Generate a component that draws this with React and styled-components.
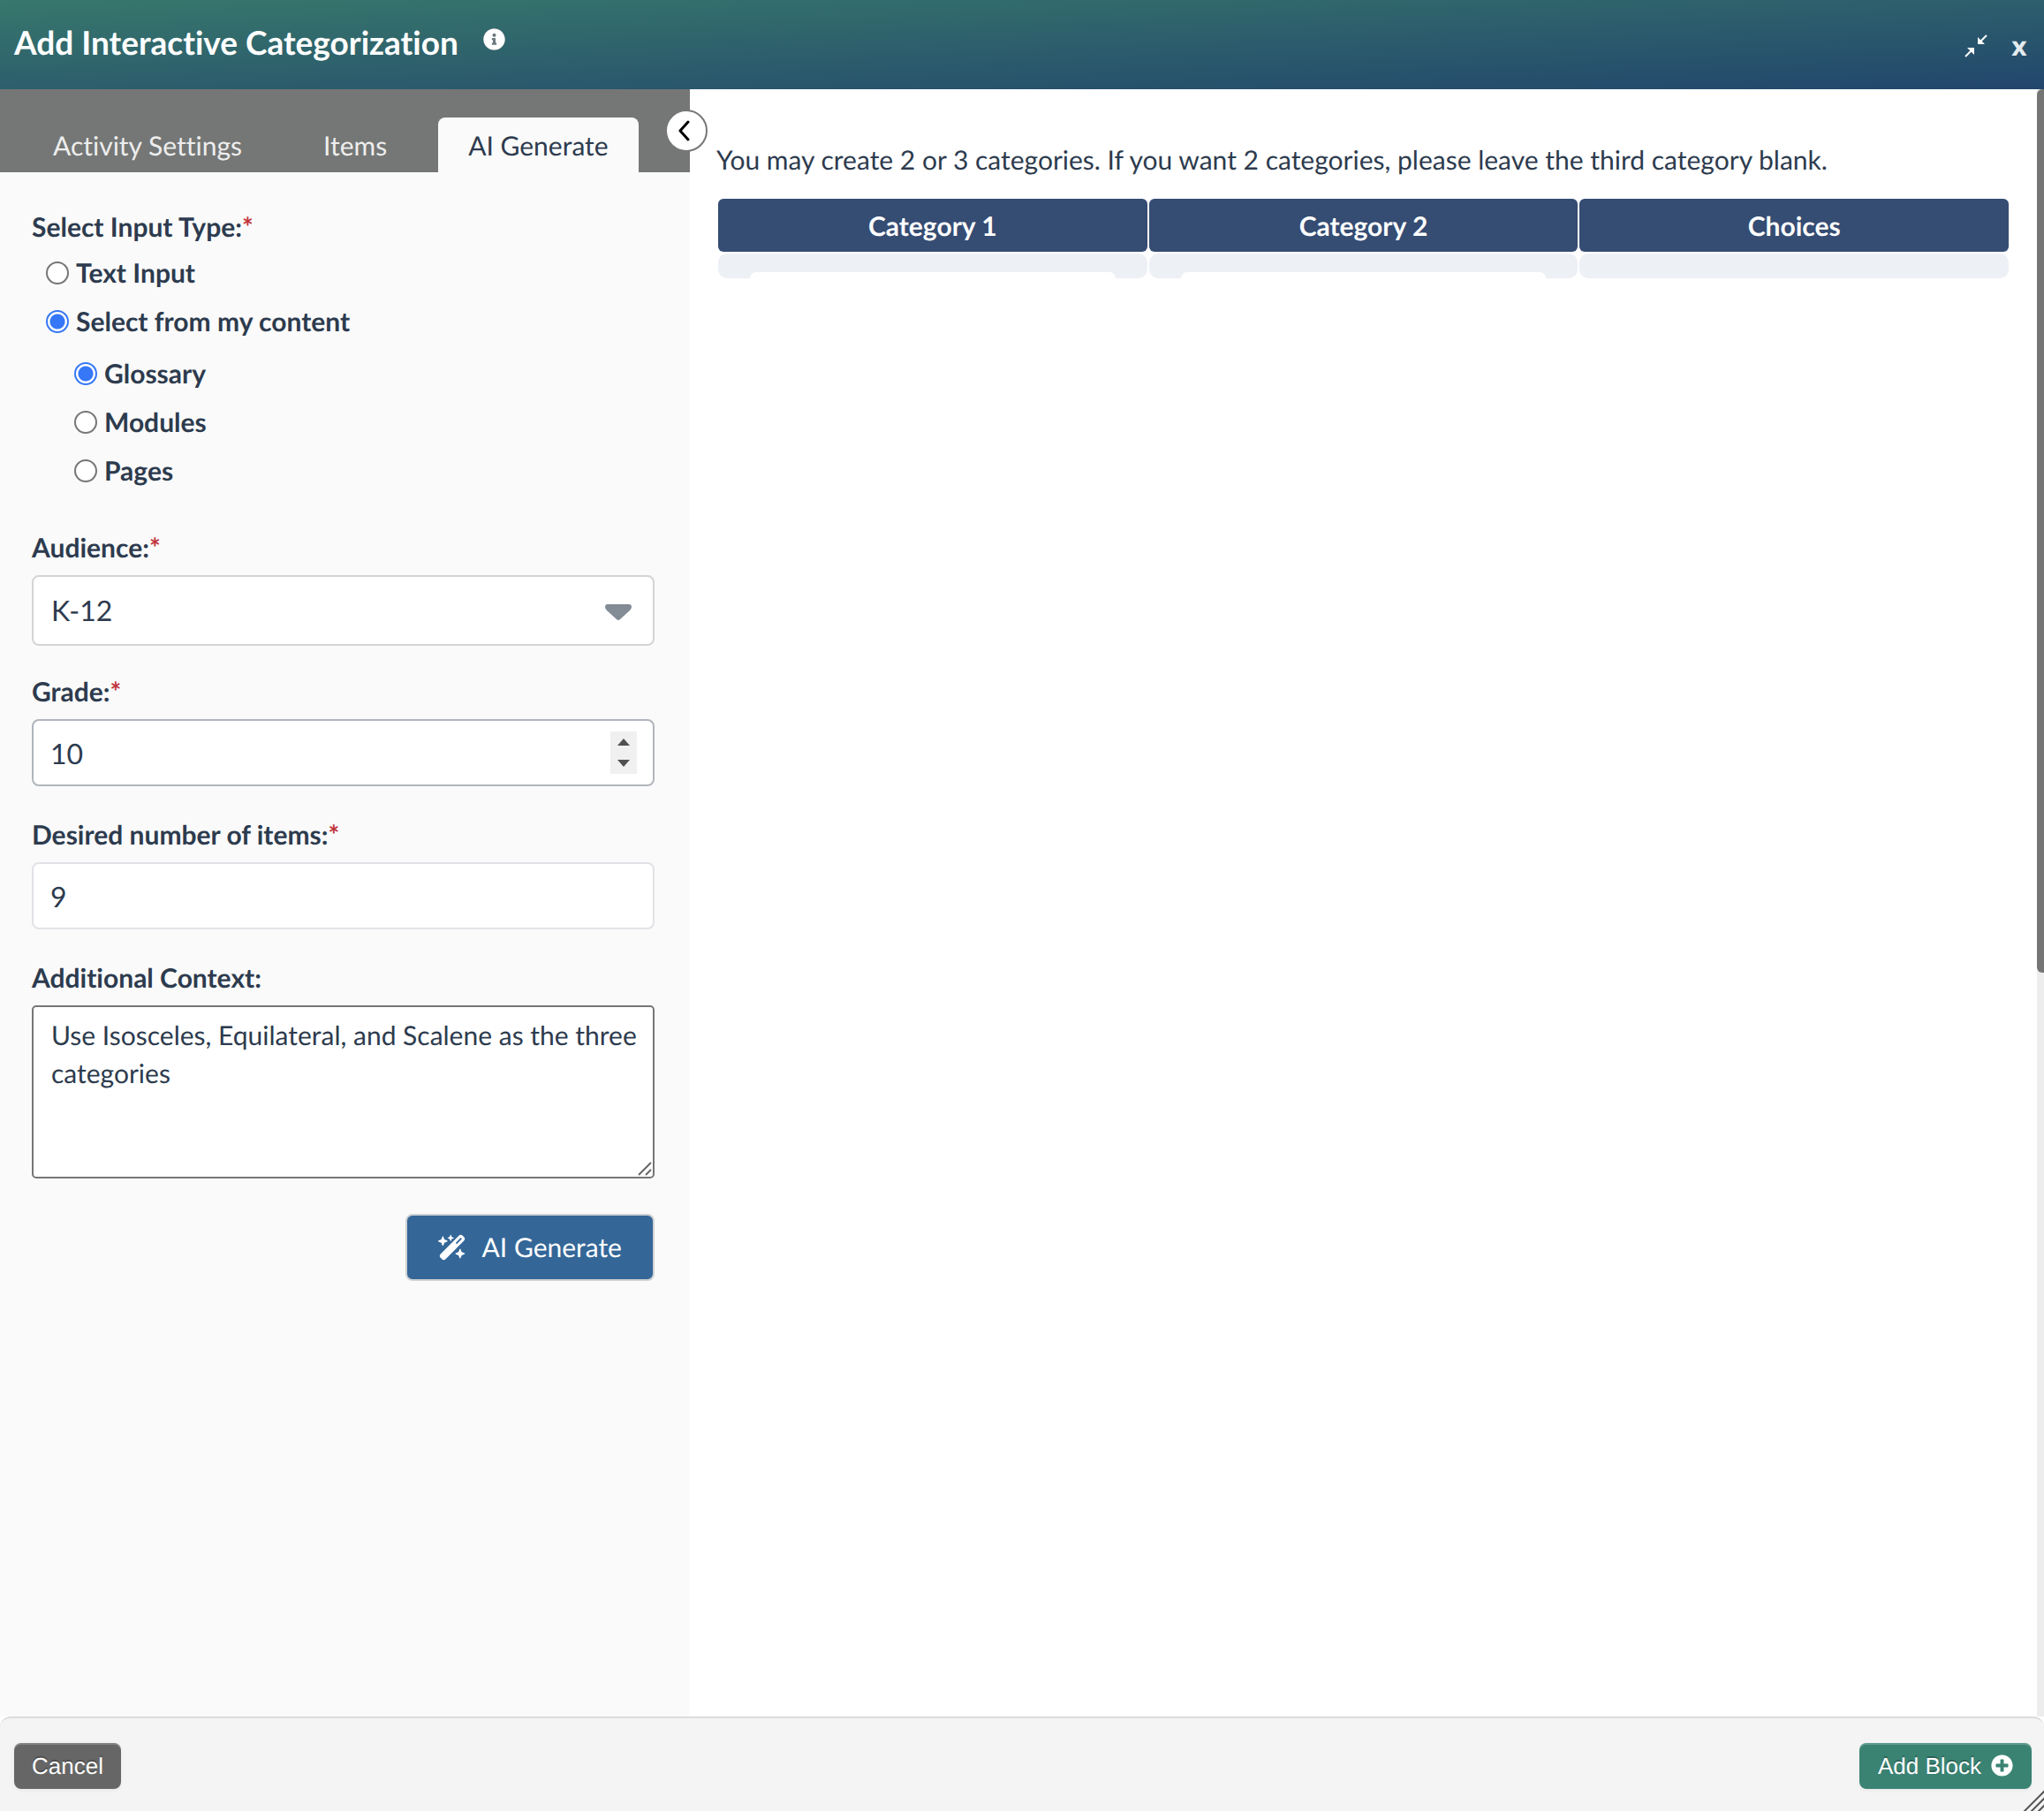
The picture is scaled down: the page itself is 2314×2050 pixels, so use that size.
import React, { useState } from "react";
import styled, { createGlobalStyle } from "styled-components";
import { FaInfoCircle, FaPlusCircle } from "react-icons/fa";
import { FaWandMagicSparkles } from "react-icons/fa6";

const GlobalStyle = createGlobalStyle`
  *, *::before, *::after { box-sizing: border-box; }
  body { margin: 0; }
  button, input, select, textarea {
    font: inherit;
    color: inherit;
    text-rendering: inherit;
    font-variant-ligatures: inherit;
  }
`;

const Dialog = styled.div`
  position: relative;
  display: flex;
  flex-direction: column;
  min-height: 100vh;
  background: #fff;
  color: #2d3b4e;
  font-family: Lato, "Open Sans", sans-serif;
  font-size: 30px;
  line-height: 44px;
  font-variant-ligatures: none;
  text-rendering: geometricPrecision;
`;

const Header = styled.header`
  display: flex;
  align-items: center;
  justify-content: space-between;
  height: 101px;
  padding: 0 16px;
  background: linear-gradient(to bottom right, #37776c, #22466c);
  color: #fff;
`;

const TitleGroup = styled.div`
  display: flex;
  align-items: flex-start;
  gap: 28px;
  padding-bottom: 6px;
`;

const Title = styled.h1`
  margin: 0;
  font-size: 37px;
  line-height: 48px;
  font-weight: 700;
`;

const IconButton = styled.button`
  display: flex;
  align-items: center;
  justify-content: center;
  padding: 0;
  border: 0;
  background: none;
  color: #fff;
  cursor: pointer;
`;

const InfoButton = styled(IconButton)`
  margin-top: 8px;
  border-radius: 50%;
  background: #6c7a80;
  font-size: 25px;
`;

const WindowControls = styled.div`
  display: flex;
  align-items: center;
  gap: 24px;
  padding-top: 2px;
`;

const CloseButton = styled(IconButton)`
  width: 24px;
  color: #e4ebee;
  font-family: "Noto Sans", sans-serif;
  font-size: 30px;
  line-height: 48px;
  font-weight: 700;
`;

const Body = styled.div`
  display: flex;
  flex: 1;
`;

const Sidebar = styled.aside`
  position: relative;
  width: 33.75%;
  flex: none;
  background: #fafafa;
`;

const Tabs = styled.nav`
  display: flex;
  align-items: flex-end;
  gap: 24px;
  height: 94px;
  padding-left: 26px;
  background: #757776;
`;

const Tab = styled.button`
  height: 62px;
  padding: 2px 34px 0;
  border: 0;
  border-radius: 8px 8px 0 0;
  background: ${(p) => (p.$active ? "#fafafa" : "transparent")};
  color: ${(p) => (p.$active ? "#2d3b4e" : "#eee")};
  cursor: pointer;
`;

const CollapseButton = styled.button`
  position: absolute;
  top: 23px;
  right: -20px;
  z-index: 1;
  display: flex;
  align-items: center;
  justify-content: center;
  width: 48px;
  height: 48px;
  padding: 0 6px 0 0;
  border: 2px solid #757776;
  border-radius: 50%;
  background: #fff;
  color: #000;
  cursor: pointer;
`;

const Form = styled.form`
  display: flex;
  flex-direction: column;
  gap: 33px;
  padding: 40px 40px 40px 36px;
`;

const LearnerFields = styled.div`
  display: flex;
  flex-direction: column;
  gap: 30px;
`;

const Field = styled.div`
  display: flex;
  flex-direction: column;
  gap: 8px;
`;

const Label = styled.label`
  line-height: 45px;
  font-weight: 700;
`;

const Required = styled.span`
  color: #c0343c;
`;

const RadioGroup = styled.fieldset`
  display: flex;
  flex-direction: column;
  gap: 11px;
  margin: 0;
  padding: 0;
  border: 0;
`;

const Legend = styled.legend`
  margin-bottom: 8px;
  padding: 0;
  font-weight: 700;
`;

const RadioSubGroup = styled.div`
  display: flex;
  flex-direction: column;
  gap: 11px;
  padding: 4px 0 10px 32px;
`;

const RadioRow = styled.label`
  display: flex;
  align-items: center;
  gap: 8px;
  padding-left: 16px;
  font-weight: 700;
`;

const Radio = styled.input`
  appearance: none;
  width: 26px;
  height: 26px;
  margin: 0;
  border: 2px solid #767676;
  border-radius: 50%;
  background: #fff;

  &:checked {
    border-color: #3577f6;
    background: radial-gradient(circle, #3577f6 8px, #fff 9px);
  }
`;

const Control = styled.div`
  display: flex;
  align-items: center;
  height: ${(p) => p.$height}px;
  padding-right: ${(p) => p.$endSpace}px;
  border: 2px solid ${(p) => p.$border};
  border-radius: 8px;
  background: #fff;
`;

const Select = styled.select`
  appearance: none;
  flex: 1;
  min-width: 0;
  height: 100%;
  padding: 0 0 0 20px;
  border: 0;
  outline: 0;
  background: transparent;
  font-size: 32px;
`;

const SelectArrow = styled.svg`
  margin-top: 4px;
`;

const NumberInput = styled.input`
  appearance: textfield;
  flex: 1;
  min-width: 0;
  height: 100%;
  padding: 0 0 0 19px;
  border: 0;
  outline: 0;
  background: transparent;
  font-size: 32px;

  &::-webkit-inner-spin-button { display: none; }
`;

const Spinner = styled.div`
  display: flex;
  flex-direction: column;
  width: 30px;
  height: 48px;
  background: #f0f0f0;
`;

const SpinnerButton = styled(IconButton)`
  flex: 1;
  color: #505050;
`;

const ContextBox = styled.div`
  position: relative;
  display: flex;
`;

const TextArea = styled.textarea`
  flex: 1;
  min-width: 0;
  height: 196px;
  padding: 11px 12px 10px 20px;
  border: 2px solid #767676;
  border-radius: 5px;
  background: #fff;
  resize: none;
  line-height: 43px;
  outline: 0;
`;

const ContextGrip = styled.svg`
  position: absolute;
  right: 3px;
  bottom: 3px;
  pointer-events: none;
`;

const GenerateButton = styled.button`
  display: flex;
  align-items: center;
  align-self: flex-end;
  gap: 18px;
  height: 76px;
  margin-top: 7px;
  padding: 0 35px;
  border: 2px solid #d0d2d4;
  border-radius: 8px;
  background: #346798;
  color: #fff;
  cursor: pointer;
`;

const Main = styled.main`
  flex: 1;
  min-width: 0;
  padding: 58px 30px 40px 30px;
`;

const Intro = styled.p`
  margin: 0 0 20px;
`;

const CategoryTable = styled.table`
  width: 100%;
  table-layout: fixed;
  border-spacing: 2px;
`;

const HeadCell = styled.th`
  height: 60px;
  padding: 2px 0 0;
  border-radius: 6px;
  background: #354c73;
  color: #fff;
  font-weight: 700;
`;

const BodyCell = styled.td`
  height: 28px;
  padding: 21px 36px 0;
  border-radius: 10px;
  background: #edf0f5;
  vertical-align: top;
`;

const Slot = styled.div`
  height: 7px;
  border-radius: 8px 8px 0 0;
  background: ${(p) => (p.$open ? "#fff" : "transparent")};
`;

const ScrollTrack = styled.div`
  width: 8px;
  flex: none;
  background: #ededed;
`;

const ScrollThumb = styled.div`
  height: 1000px;
  border-radius: 6px 0 0 6px;
  background: #757575;
`;

const Footer = styled.footer`
  display: flex;
  align-items: center;
  justify-content: space-between;
  height: 107px;
  padding: 2px 14px 0 16px;
  border-top: 2px solid #dcdcdc;
  border-radius: 12px 12px 0 0;
  background: #f4f4f4;
`;

const FooterButton = styled.button`
  display: flex;
  align-items: center;
  gap: 11px;
  height: 52px;
  padding: 0 ${(p) => (p.$primary ? 21 : 20)}px;
  border: 0;
  border-radius: 8px;
  background: ${(p) => (p.$primary ? "#3a8373" : "#666")};
  box-shadow: inset 0 2px 0 rgba(255, 255, 255, 0.2), 0 2px 4px rgba(0, 0, 0, 0.05);
  color: #fff;
  font-family: "Liberation Sans", Arial, sans-serif;
  font-size: 26px;
  line-height: 40px;
  text-shadow: 0 -2px 0 rgba(0, 0, 0, 0.25);
  cursor: pointer;
`;

const DialogGrip = styled.svg`
  position: absolute;
  right: 0;
  bottom: 0;
`;

const tabs = ["Activity Settings", "Items", "AI Generate"];
const sources = ["Glossary", "Modules", "Pages"];

function RadioOption({ name, label, value, onChange }) {
  return (
    <RadioRow>
      <Radio type="radio" name={name} checked={value === label} onChange={() => onChange(label)} />
      {label}
    </RadioRow>
  );
}

export default function App() {
  const [tab, setTab] = useState("AI Generate");
  const [inputType, setInputType] = useState("Select from my content");
  const [source, setSource] = useState("Glossary");
  const [grade, setGrade] = useState(10);

  return (
    <>
      <GlobalStyle />
      <Dialog>
        <Header>
          <TitleGroup>
            <Title>Add Interactive Categorization</Title>
            <InfoButton aria-label="Information"><FaInfoCircle /></InfoButton>
          </TitleGroup>
          <WindowControls>
            <IconButton aria-label="Shrink window">
              <svg width="26" height="26" viewBox="0 0 26 26" fill="none" stroke="#fff" strokeWidth="2">
                <path d="M1 25 L9 17 M25 1 L17 9" />
                <path d="M3 15 H11 V23 L8 20 L6 18 Z M15 3 V11 H23 L20 8 Z" fill="#fff" stroke="none" />
              </svg>
            </IconButton>
            <CloseButton aria-label="Close">x</CloseButton>
          </WindowControls>
        </Header>

        <Body>
          <Sidebar>
            <Tabs>
              {tabs.map((name) => (
                <Tab key={name} $active={tab === name} onClick={() => setTab(name)}>{name}</Tab>
              ))}
            </Tabs>
            <CollapseButton aria-label="Collapse panel">
              <svg width="14" height="24" viewBox="0 0 14 24" fill="none" stroke="currentColor" strokeWidth="3" strokeLinecap="round" strokeLinejoin="round">
                <path d="M12 2 L3 12 L12 22" />
              </svg>
            </CollapseButton>

            <Form onSubmit={(e) => e.preventDefault()}>
              <RadioGroup>
                <Legend>Select Input Type:<Required>*</Required></Legend>
                <RadioOption name="type" label="Text Input" value={inputType} onChange={setInputType} />
                <RadioOption name="type" label="Select from my content" value={inputType} onChange={setInputType} />
                <RadioSubGroup>
                  {sources.map((label) => (
                    <RadioOption key={label} name="source" label={label} value={source} onChange={setSource} />
                  ))}
                </RadioSubGroup>
              </RadioGroup>

              <LearnerFields>
                <Field>
                  <Label htmlFor="audience">Audience:<Required>*</Required></Label>
                  <Control $height={80} $endSpace={23} $border="#d3d4d5">
                    <Select id="audience" defaultValue="K-12"><option>K-12</option></Select>
                    <SelectArrow width="32" height="20" viewBox="0 0 32 20" fill="#838b95">
                      <path d="M4 1 H28 Q31 1 31 4 Q31 6 29 8 L18 18 Q16 20 14 18 L3 8 Q1 6 1 4 Q1 1 4 1 Z" />
                    </SelectArrow>
                  </Control>
                </Field>

                <Field>
                  <Label htmlFor="grade">Grade:<Required>*</Required></Label>
                  <Control $height={76} $endSpace={18} $border="#b0b5bc">
                    <NumberInput id="grade" type="number" value={grade} onChange={(e) => setGrade(Number(e.target.value))} />
                    <Spinner>
                      <SpinnerButton type="button" aria-label="Increase grade" onClick={() => setGrade(grade + 1)}>
                        <svg width="14" height="8" viewBox="0 0 14 8" fill="currentColor"><path d="M7 0 L14 8 H0 Z" /></svg>
                      </SpinnerButton>
                      <SpinnerButton type="button" aria-label="Decrease grade" onClick={() => setGrade(grade - 1)}>
                        <svg width="14" height="8" viewBox="0 0 14 8" fill="currentColor"><path d="M0 0 H14 L7 8 Z" /></svg>
                      </SpinnerButton>
                    </Spinner>
                  </Control>
                </Field>
              </LearnerFields>

              <Field>
                <Label htmlFor="count">Desired number of items:<Required>*</Required></Label>
                <Control $height={76} $endSpace={18} $border="#e2e2e7">
                  <NumberInput id="count" type="number" defaultValue={9} />
                </Control>
              </Field>

              <Field>
                <Label htmlFor="context">Additional Context:</Label>
                <ContextBox>
                  <TextArea id="context" defaultValue="Use Isosceles, Equilateral, and Scalene as the three categories" />
                  <ContextGrip width="16" height="16" viewBox="0 0 16 16" stroke="#666" strokeWidth="2">
                    <path d="M1 15 L15 1 M9 15 L15 9" />
                  </ContextGrip>
                </ContextBox>
              </Field>

              <GenerateButton type="submit">
                <FaWandMagicSparkles size={32} />
                AI Generate
              </GenerateButton>
            </Form>
          </Sidebar>

          <Main>
            <Intro>You may create 2 or 3 categories. If you want 2 categories, please leave the third category blank.</Intro>
            <CategoryTable>
              <thead>
                <tr>
                  <HeadCell>Category 1</HeadCell>
                  <HeadCell>Category 2</HeadCell>
                  <HeadCell>Choices</HeadCell>
                </tr>
              </thead>
              <tbody>
                <tr>
                  <BodyCell><Slot $open /></BodyCell>
                  <BodyCell><Slot $open /></BodyCell>
                  <BodyCell><Slot /></BodyCell>
                </tr>
              </tbody>
            </CategoryTable>
          </Main>
          <ScrollTrack><ScrollThumb /></ScrollTrack>
        </Body>

        <Footer>
          <FooterButton>Cancel</FooterButton>
          <FooterButton $primary>Add Block <FaPlusCircle size={25} /></FooterButton>
        </Footer>
        <DialogGrip width="24" height="24" viewBox="0 0 24 24" stroke="#555" strokeWidth="2">
          <path d="M1 25 L25 1 M9 25 L25 9 M17 25 L25 17" />
        </DialogGrip>
      </Dialog>
    </>
  );
}
